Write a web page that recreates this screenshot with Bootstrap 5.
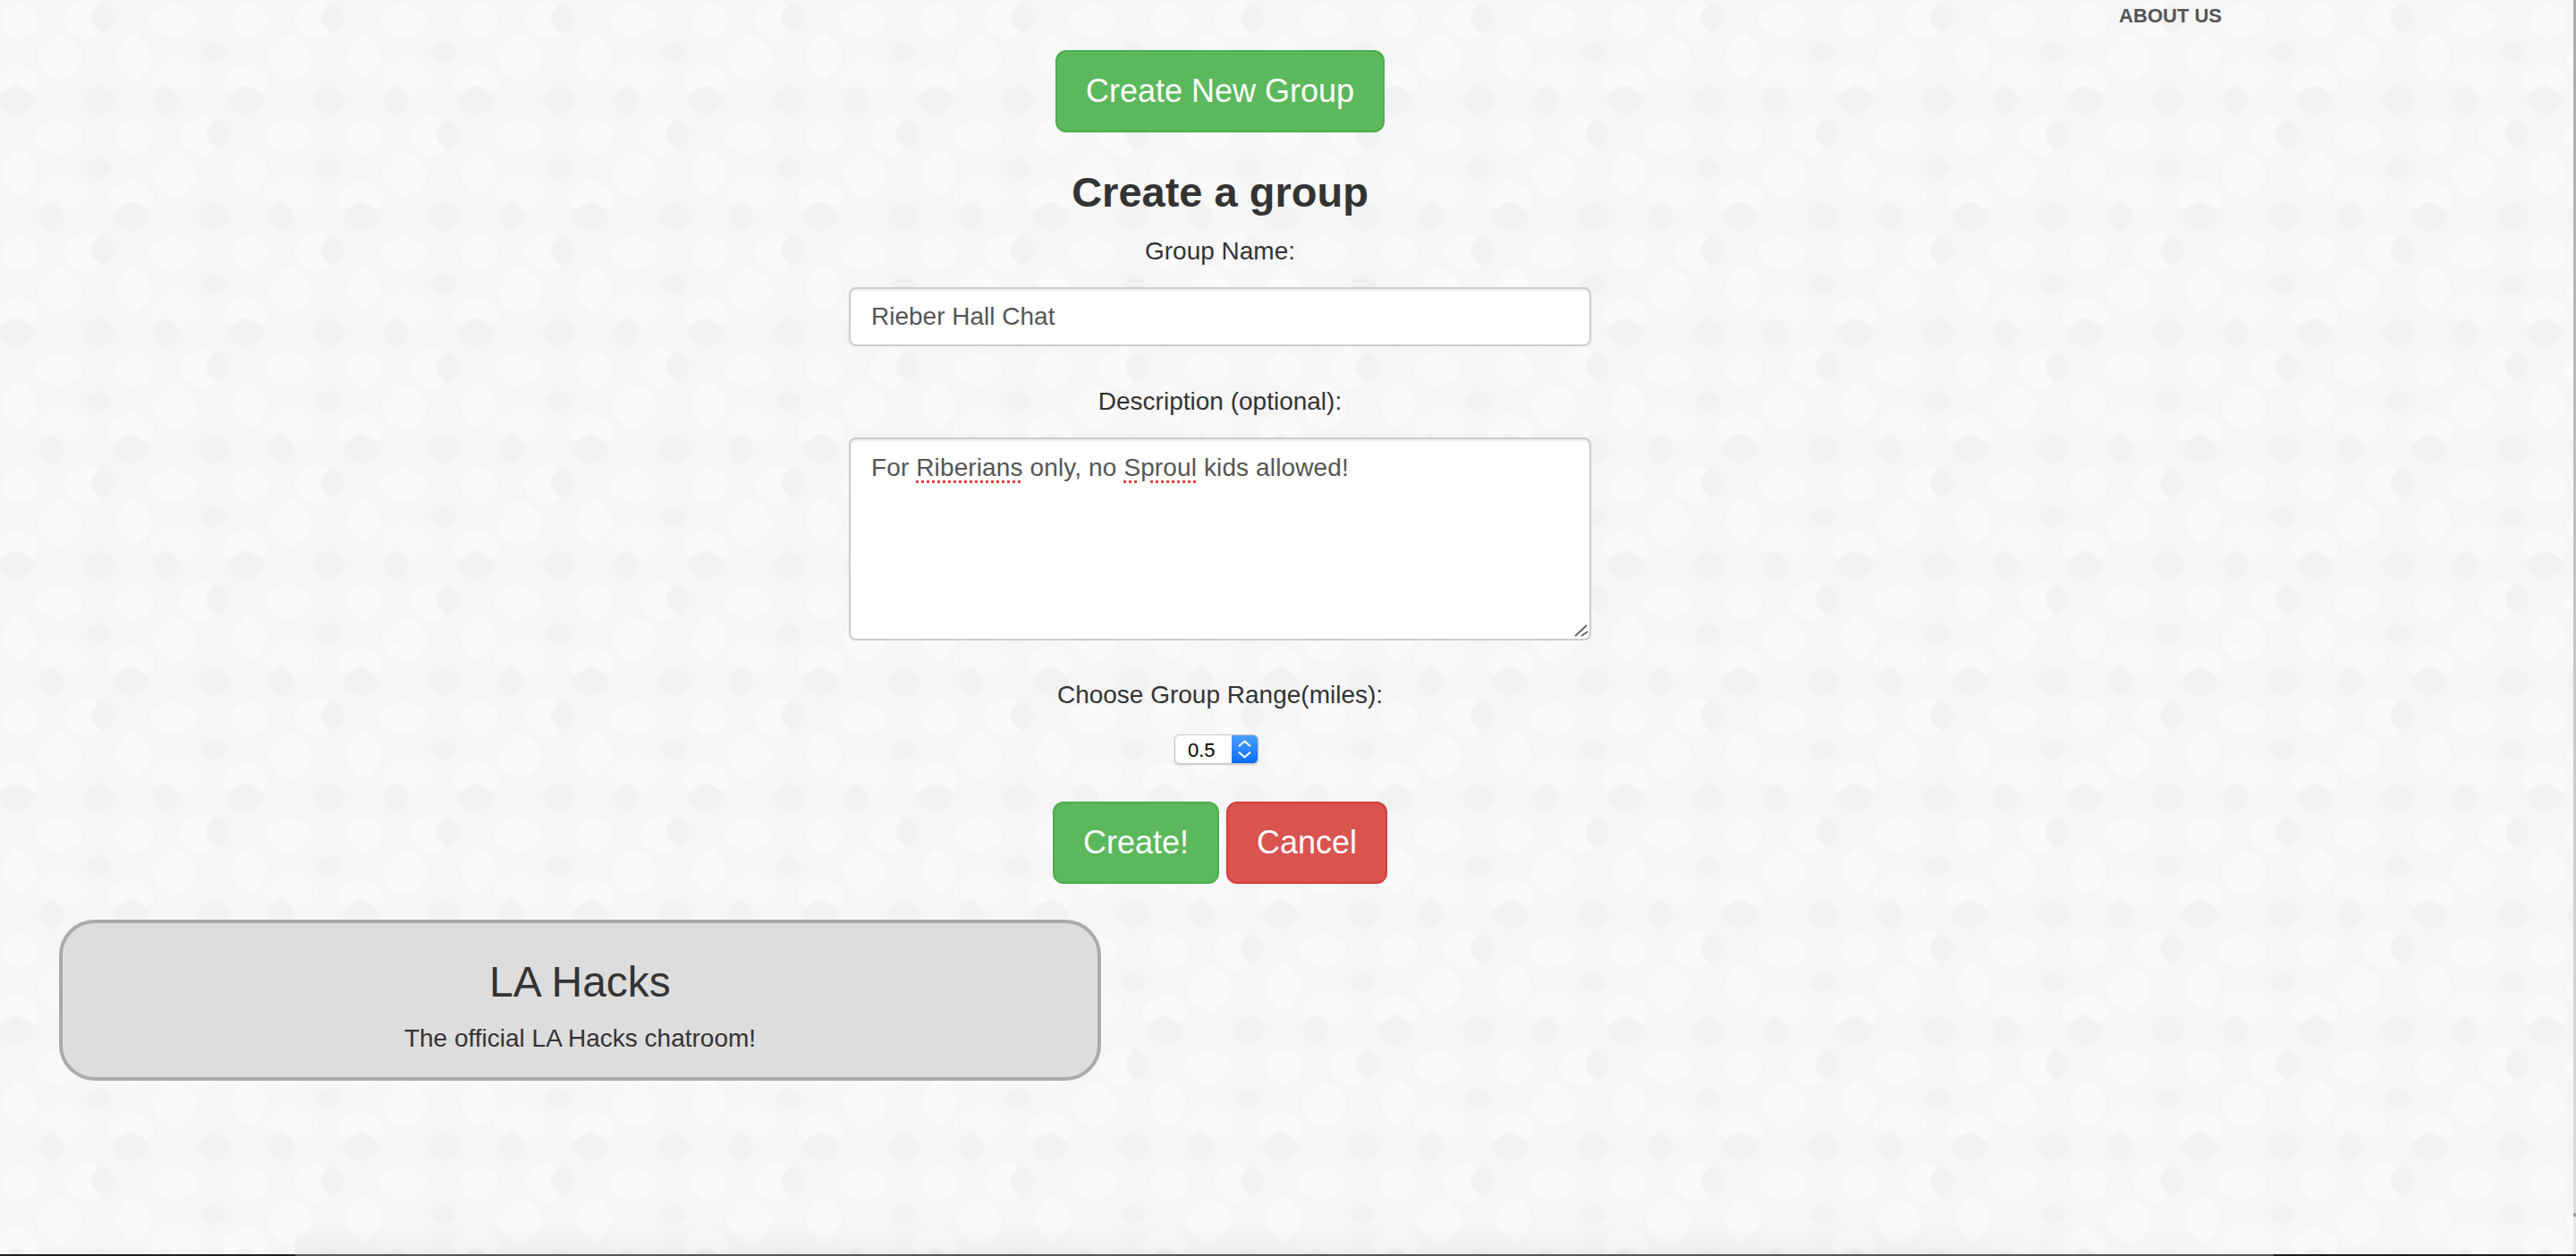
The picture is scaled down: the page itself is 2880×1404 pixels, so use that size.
<!DOCTYPE html>
<html lang="en">
<head>
<meta charset="utf-8">
<title>Create a group</title>
<link href="https://cdn.jsdelivr.net/npm/bootstrap@5.3.0/dist/css/bootstrap.min.css" rel="stylesheet">
<style>
html, body { height: 100%; }
body {
  position: relative; overflow: hidden; color: #333; font-size: 28px; line-height: 40px;
  font-family: "Liberation Sans", Arial, sans-serif;
  background-color: #f6f6f6;
  background-image: url("data:image/svg+xml,<svg xmlns='http://www.w3.org/2000/svg' xmlns:xlink='http://www.w3.org/1999/xlink' width='257' height='260'><defs><filter id='b'><feGaussianBlur stdDeviation='.8'/></filter><path id='l' d='M0-1C.6-.7 1-.4 1 0C1 .4.6.7 0 1C-.6.7-1 .4-1 0C-1-.4-.6-.7 0-1Z'/><g id='m'><g fill='%23f8f8f8'><use xlink:href='%23l' transform='translate(197 86) scale(30 24)'/></g><g fill='%23fafafa'><use xlink:href='%23l' transform='translate(22 23) scale(20 21)'/><use xlink:href='%23l' transform='translate(97 22) scale(24 23)'/><use xlink:href='%23l' transform='translate(194 23) scale(26 20)'/><use xlink:href='%23l' transform='translate(67 65) scale(24 27)'/><use xlink:href='%23l' transform='translate(150 63) scale(19 26)'/><use xlink:href='%23l' transform='translate(18 92) scale(25 21)'/></g><g fill='%23f8f8f8'><use xlink:href='%23l' transform='translate(58 57) scale(12 12)'/></g><g fill='%23f1f1f1'><use xlink:href='%23l' transform='translate(115 20) scale(13 17)'/><use xlink:href='%23l' transform='translate(239 58) scale(14 12)'/><use xlink:href='%23l' transform='translate(18 112) scale(20 17)'/><use xlink:href='%23l' transform='translate(111 112) scale(18 17)'/><use xlink:href='%23l' transform='translate(186 112) scale(14 17)'/></g></g></defs><g filter='url(%23b)'><use xlink:href='%23m'/><use xlink:href='%23m' x='257'/><use xlink:href='%23m' x='-257'/><use xlink:href='%23m' x='128.5' y='130'/><use xlink:href='%23m' x='-128.5' y='130'/><use xlink:href='%23m' x='128.5' y='-130'/><use xlink:href='%23m' x='-128.5' y='-130'/></g></svg>");
  background-size: 257px 260px;
}
.top-strip { height: 34px; padding-right: 396px; }
.about-link { font-size: 22px; font-weight: 700; line-height: 36px; height: 34px; color: #555; text-decoration: none; }
.form-block { width: 830px; margin-left: 949px; }
.big-btn { font-size: 36px; line-height: 48px; padding: 20px 32px; border-width: 2px; border-radius: 12px; }
.btn-green { background: #5cb85c; border-color: #4cae4c; color: #fff; }
.btn-red { background: #d9534f; border-color: #d43f3a; color: #fff; }
.new-btn { margin-top: 22px; }
.form-title { font-size: 47px; font-weight: 700; line-height: 53px; margin: 40px 0 0; color: #333; }
.field-label { display: block; margin: 20px 0 0; line-height: 40px; }
.name-field, .desc-field {
  font-size: 28px; line-height: 40px; color: #555; background-color: #fff;
  border: 2px solid #ccc; border-radius: 8px; padding: 12px 23px;
  box-shadow: inset 0 2px 2px rgba(0,0,0,.075);
}
.name-field { height: 66px; margin-top: 20px; }
.desc-label { margin-top: 42px; }
.desc-field {
  height: 227px; margin-top: 20px; padding-top: 12px; overflow: hidden; letter-spacing: .12px;
  background-image: url("data:image/svg+xml,<svg xmlns='http://www.w3.org/2000/svg' width='16' height='16'><path d='M1 14L14 2M8 14l7-5' fill='none' stroke='%23666' stroke-width='2'/></svg>");
  background-repeat: no-repeat; background-position: right 1px bottom 1px;
}
.spell { text-decoration: underline dotted #e8403a 3px; text-underline-offset: 5px; }
.range-label { margin-top: 41px; }
.range-select {
  display: block; width: 94px; height: 33px; margin: 24px 0 0 364px; padding: 0 0 0 14px;
  font-family: inherit; font-size: 22px; line-height: 33px; color: #000; border: 1px solid #c8c8c8; border-radius: 6px;
  box-shadow: 0 1px 2px rgba(0,0,0,.2);
  -webkit-appearance: none; appearance: none;
  background-color: #fff;
  background-image: url("data:image/svg+xml,<svg xmlns='http://www.w3.org/2000/svg' width='29' height='33'><path d='M8 13l6.500-6 6.500 6M8 20l6.500 6 6.500-6' fill='none' stroke='%23fff' stroke-width='2.200'/></svg>"), linear-gradient(#4aa0ff, #0a6cff);
  background-repeat: no-repeat; background-position: right center; background-size: 29px 100%;
}
.action-row { gap: 8px; margin-top: 42px; }
.group-tile {
  width: 1165px; height: 180px; margin: 40px 0 0 66px; background: #ddd;
  border: 4px solid #aaa; border-radius: 40px; text-align: center; padding-top: 39px;
}
.group-name { font-size: 48px; font-weight: 400; line-height: 53px; margin: 0; color: #333; }
.group-desc { font-size: 28px; line-height: 40px; margin: 17px 0 0; color: #333; }
.bottom-shade {
  position: absolute; left: 330px; right: 0; bottom: 2px; height: 34px; pointer-events: none;
  background: linear-gradient(rgba(0,0,0,0), rgba(0,0,0,.035));
  -webkit-mask-image: linear-gradient(90deg, #000 70%, transparent 85%); mask-image: linear-gradient(90deg, #000 70%, transparent 85%);
}
.bottom-edge { position: absolute; left: 0; right: 0; bottom: 0; height: 2px; background: linear-gradient(90deg, #222 0 330px, #555 330px 2542px, #1c1c22 2542px); }
.right-edge { position: absolute; top: 0; right: 0; bottom: 2px; width: 3px; background: linear-gradient(#aaa 0, #ddd 1356px, #999 1356px 1360px, #e6e6e6 1360px); }
</style>
</head>
<body>
<nav class="top-strip d-flex justify-content-end">
  <a class="about-link" href="#">ABOUT US</a>
</nav>
<form class="form-block text-center">
  <button type="button" class="btn big-btn btn-green new-btn">Create New Group</button>
  <h3 class="form-title">Create a group</h3>
  <label class="field-label" for="gname">Group Name:</label>
  <input id="gname" class="form-control name-field" type="text" value="Rieber Hall Chat">
  <label class="field-label desc-label">Description (optional):</label>
  <div class="form-control desc-field text-start">For <span class="spell">Riberians</span> only, no <span class="spell">Sproul</span> kids allowed!</div>
  <label class="field-label range-label" for="grange">Choose Group Range(miles):</label>
  <select id="grange" class="range-select"><option>0.5</option><option>1</option><option>2</option></select>
  <div class="action-row d-flex justify-content-center">
    <button type="button" class="btn big-btn btn-green">Create!</button>
    <button type="button" class="btn big-btn btn-red">Cancel</button>
  </div>
</form>
<div class="group-tile">
  <h3 class="group-name">LA Hacks</h3>
  <p class="group-desc">The official LA Hacks chatroom!</p>
</div>
<div class="bottom-shade"></div>
<div class="bottom-edge"></div>
<div class="right-edge"></div>
<script src="https://cdn.jsdelivr.net/npm/bootstrap@5.3.0/dist/js/bootstrap.bundle.min.js"></script>
</body>
</html>
